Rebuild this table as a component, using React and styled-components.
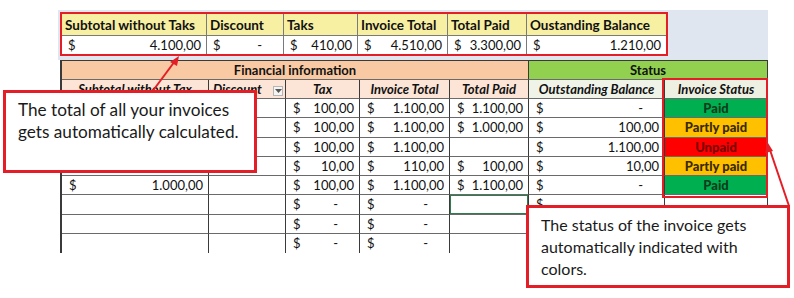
import styled, { createGlobalStyle } from "styled-components";

const GlobalStyle = createGlobalStyle`
  html, body { margin: 0; padding: 0; background: #ffffff; }
  body { font-family: Lato, "Liberation Sans", sans-serif; color: #111; }
`;

const RED = "#e41e26";

const summary = [
  { label: "Subtotal without Taks", value: "4.100,00" },
  { label: "Discount", value: "-" },
  { label: "Taks", value: "410,00" },
  { label: "Invoice Total", value: "4.510,00" },
  { label: "Total Paid", value: "3.300,00" },
  { label: "Oustanding Balance", value: "1.210,00" },
];

const statusColors = {
  Paid: { bg: "#00b050", fg: "#0b3d1c" },
  "Partly paid": { bg: "#ffc000", fg: "#3a2a00" },
  Unpaid: { bg: "#ff0000", fg: "#7a0000" },
};

// [subtotal, discount, tax, total, paid, outstanding, status]
const rows = [
  [null, null, "100,00", "1.100,00", "1.100,00", "-", "Paid"],
  [null, null, "100,00", "1.100,00", "1.000,00", "100,00", "Partly paid"],
  [null, null, "100,00", "1.100,00", null, "1.100,00", "Unpaid"],
  [null, null, "10,00", "110,00", "100,00", "10,00", "Partly paid"],
  ["1.000,00", null, "100,00", "1.100,00", "1.100,00", "-", "Paid"],
  [null, null, "-", "-", null, "", null],
  [null, null, "-", "-", null, null, null],
  [null, null, "-", "-", null, null, null],
];

function Money({ value }) {
  if (value === null) return null;
  return (
    <>
      <span>$</span>
      {value && <Amount $dash={value === "-"}>{value}</Amount>}
    </>
  );
}

export default function App() {
  return (
    <Page>
      <GlobalStyle />
      <Sheet>
        <Summary>
          {summary.map((s, i) => (
            <SumHead key={s.label} $last={i === summary.length - 1}>
              {s.label}
            </SumHead>
          ))}
          {summary.map((s, i) => (
            <SumCell key={s.label} $last={i === summary.length - 1}>
              <Money value={s.value} />
            </SumCell>
          ))}
        </Summary>
      </Sheet>

      <Table>
        <GroupHead $span={5} $bg="#f8c9a2">Financial information</GroupHead>
        <GroupHead $span={2} $bg="#92d050">Status</GroupHead>

        <ColHead $bg="#fce4d6">Subtotal without Tax</ColHead>
        <ColHead $bg="#fce4d6" $left>
          Discount
          <FilterButton>
            <svg width="7" height="4" viewBox="0 0 7 4">
              <path d="M0 0h7L3.5 4z" fill="#555" />
            </svg>
          </FilterButton>
        </ColHead>
        <ColHead $bg="#fce4d6">Tax</ColHead>
        <ColHead $bg="#fce4d6">Invoice Total</ColHead>
        <ColHead $bg="#fce4d6">Total Paid</ColHead>
        <ColHead $bg="#eff3e8">Outstanding Balance</ColHead>
        <ColHead $bg="#eef0e2">Invoice Status</ColHead>

        {rows.map((r, ri) => {
          const last = ri === rows.length - 1;
          return r.map((v, ci) =>
            ci === 6 ? (
              <StatusCell
                key={`${ri}-${ci}`}
                $bg={v ? statusColors[v].bg : "#fff"}
                $fg={v ? statusColors[v].fg : "#111"}
                $last={last}
              >
                {v}
              </StatusCell>
            ) : (
              <Cell
                key={`${ri}-${ci}`}
                $last={last}
                $selected={ri === 5 && ci === 4}
              >
                <Money value={v} />
              </Cell>
            )
          );
        })}
      </Table>

      <StatusFrame />

      <Callout $left={3} $top={90} $width={254} $size={17.2}>
        The total of all your invoices
        <br />
        gets automatically calculated.
      </Callout>
      <Callout $left={526} $top={205} $width={264} $size={16}>
        The status of the invoice gets
        <br />
        automatically indicated with
        <br />
        colors.
      </Callout>

      <Arrows width="794" height="298" viewBox="0 0 794 298">
        <line x1="152" y1="92" x2="175" y2="61" stroke={RED} strokeWidth="2" />
        <polygon points="179,56 170,62 177,66" fill={RED} />
        <line x1="789" y1="206" x2="770" y2="150" stroke={RED} strokeWidth="2" />
        <polygon points="768,143 765,153 773,151" fill={RED} />
      </Arrows>
    </Page>
  );
}

const Page = styled.div`
  position: relative;
  width: 794px;
  height: 298px;
  padding-top: 10px;
  box-sizing: border-box;
  overflow: hidden;
`;

const Sheet = styled.div`
  margin-left: 58px;
  width: 710px;
  padding: 2px 0 4px 2px;
  box-sizing: border-box;
  background: #dfe6ef;
`;

const Summary = styled.div`
  display: grid;
  grid-template-columns: 145px 77px 74px 90px 79px 139px;
  grid-template-rows: 22px 18px;
  width: 608px;
  border: 2px solid ${RED};
  box-sizing: border-box;
  font-size: 13px;
`;

const SumHead = styled.div`
  display: flex;
  align-items: center;
  padding-left: 3px;
  background: #f7efa2;
  font-weight: 700;
  font-size: 13.5px;
  border-right: ${(p) => (p.$last ? "none" : "1px solid #7a7a7a")};
  border-bottom: 1px solid #7a7a7a;
  white-space: nowrap;
`;

const SumCell = styled.div`
  display: flex;
  align-items: center;
  justify-content: space-between;
  padding: 0 5px 0 6px;
  background: #ffffff;
  border-right: ${(p) => (p.$last ? "none" : "1px solid #7a7a7a")};
  white-space: nowrap;
`;

const Amount = styled.span`
  margin-right: ${(p) => (p.$dash ? "16px" : "0")};
`;

const Table = styled.div`
  display: grid;
  grid-template-columns: 147px 77px 74px 90px 79px 136px 103px;
  grid-template-rows: 20px 19px repeat(8, 19.25px);
  width: 706px;
  margin-left: 60px;
  border-left: 2px solid #3a3a3a;
  box-sizing: border-box;
  font-size: 13px;
`;

const GroupHead = styled.div`
  grid-column: span ${(p) => p.$span};
  display: flex;
  align-items: center;
  justify-content: center;
  background: ${(p) => p.$bg};
  font-weight: 700;
  border-top: 1px solid #3a3a3a;
  border-right: 1px solid #3a3a3a;
  border-bottom: 1px solid #6a6a6a;
  box-sizing: border-box;
`;

const ColHead = styled.div`
  position: relative;
  display: flex;
  align-items: center;
  justify-content: ${(p) => (p.$left ? "flex-start" : "center")};
  padding-left: ${(p) => (p.$left ? "4px" : "0")};
  background: ${(p) => p.$bg};
  font-weight: 700;
  font-style: italic;
  white-space: nowrap;
  border-right: 1px solid #3a3a3a;
  border-bottom: 1px solid #6a6a6a;
  box-sizing: border-box;
`;

const FilterButton = styled.span`
  position: absolute;
  right: 2px;
  top: 6px;
  width: 10px;
  height: 10px;
  display: flex;
  align-items: center;
  justify-content: center;
  background: #f4f4f4;
  border: 1px solid #b5b5b5;
  box-sizing: border-box;
`;

const Cell = styled.div`
  display: flex;
  align-items: center;
  justify-content: space-between;
  padding: 0 5px 0 7px;
  background: #ffffff;
  white-space: nowrap;
  border-right: 1px solid #3a3a3a;
  border-bottom: ${(p) => (p.$last ? "none" : "1px solid #6a6a6a")};
  box-shadow: ${(p) => (p.$selected ? "inset 0 0 0 1px #2f7d4f" : "none")};
  box-sizing: border-box;
`;

const StatusCell = styled.div`
  display: flex;
  align-items: center;
  justify-content: center;
  background: ${(p) => p.$bg};
  color: ${(p) => p.$fg};
  font-weight: 900;
  border-right: 1px solid #3a3a3a;
  border-bottom: ${(p) => (p.$last ? "none" : "1px solid #6a6a6a")};
  box-sizing: border-box;
`;

const StatusFrame = styled.div`
  position: absolute;
  left: 662px;
  top: 78px;
  width: 106px;
  height: 120px;
  border: 2px solid ${RED};
  box-sizing: border-box;
`;

const Callout = styled.div`
  position: absolute;
  left: ${(p) => p.$left}px;
  top: ${(p) => p.$top}px;
  width: ${(p) => p.$width}px;
  height: 83px;
  padding: 6px 0 0 12px;
  border: 3px solid ${RED};
  background: #ffffff;
  box-sizing: border-box;
  font-size: ${(p) => p.$size}px;
  line-height: 22px;
  color: #1a1a1a;
  white-space: nowrap;
`;

const Arrows = styled.svg`
  position: absolute;
  left: 0;
  top: 0;
  pointer-events: none;
`;
